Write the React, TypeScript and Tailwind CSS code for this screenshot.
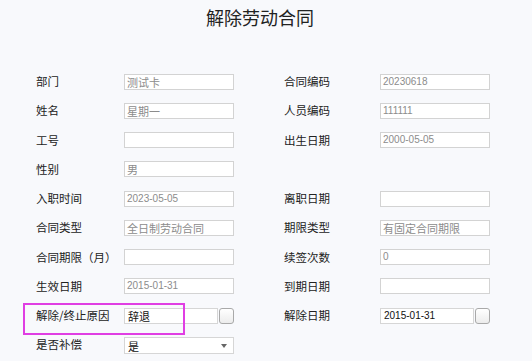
import React from 'react';

type Field = {
  label: string;
  value?: string;
  kind?: 'text' | 'date' | 'select';
  dark?: boolean;
  digits?: boolean;
};

// 左右两列，每行一对
const rows: [Field, Field | null][] = [
  [{ label: '部门', value: '测试卡' }, { label: '合同编码', value: '20230618', digits: true }],
  [{ label: '姓名', value: '星期一' }, { label: '人员编码', value: '111111', digits: true }],
  [{ label: '工号', value: '' }, { label: '出生日期', value: '2000-05-05', digits: true }],
  [{ label: '性别', value: '男' }, null],
  [{ label: '入职时间', value: '2023-05-05', digits: true }, { label: '离职日期', value: '' }],
  [{ label: '合同类型', value: '全日制劳动合同' }, { label: '期限类型', value: '有固定合同期限' }],
  [{ label: '合同期限（月）', value: '' }, { label: '续签次数', value: '0', digits: true }],
  [{ label: '生效日期', value: '2015-01-31', digits: true }, { label: '到期日期', value: '' }],
  [
    { label: '解除/终止原因', value: '辞退', kind: 'date', dark: true },
    { label: '解除日期', value: '2015-01-31', kind: 'date', dark: true, digits: true },
  ],
  [{ label: '是否补偿', value: '是', kind: 'select', dark: true }, null],
];

const PickButton = () => (
  <div className="w-[15px] h-[16px] rounded-[3px] border border-[#a9a9a9] bg-gradient-to-b from-white to-[#ececec] shrink-0" />
);

const Input = ({ f }: { f: Field }) => {
  const textCls = `${f.dark ? 'text-[#111]' : 'text-[#8c8c8c]'} ${f.digits ? "text-[10px] font-['Liberation_Sans',sans-serif]" : 'text-[11px]'}`;
  if (f.kind === 'date') {
    return (
      <div className="flex items-center w-[110px] gap-[1px]">
        <div className={`flex-1 h-[16px] bg-white border border-[#d6d6d6] pl-[3px] leading-[14px] ${textCls}`}>{f.value}</div>
        <PickButton />
      </div>
    );
  }
  if (f.kind === 'select') {
    return (
      <div className={`w-[110px] h-[17px] mt-[2px] bg-white border border-[#d6d6d6] pl-[3px] flex items-center justify-between pr-[6px] ${textCls}`}>
        <span>{f.value}</span>
        <span className="w-0 h-0 border-l-[3px] border-r-[3px] border-t-[4px] border-l-transparent border-r-transparent border-t-[#666]" />
      </div>
    );
  }
  return (
    <div className={`w-[110px] h-[16px] bg-white border border-[#d3d3d3] pl-[2px] leading-[14px] ${textCls}`}>
      {f.value}
    </div>
  );
};

export default function App() {
  return (
    <div className="relative w-[532px] h-[361px] overflow-hidden bg-[#f8f9fc] font-['Noto_Sans_CJK_SC','Liberation_Sans',sans-serif] text-[#222]">
      {/* 标题 */}
      <div className="h-[67px] pt-[5px] pl-[206px] text-[18px] leading-[24px] text-[#222]">解除劳动合同</div>

      {/* 表单 */}
      <div className="grid grid-cols-[248px_1fr] auto-rows-[29.25px] pl-[36px]">
        {rows.map(([l, r], i) => (
          <React.Fragment key={i}>
            <div className="flex items-center">
              <div className="w-[88px] text-[11.5px]">{l.label}</div>
              <Input f={l} />
            </div>
            <div className="flex items-center">
              {r && (
                <>
                  <div className="w-[96px] text-[11.5px]">{r.label}</div>
                  <Input f={r} />
                </>
              )}
            </div>
          </React.Fragment>
        ))}
      </div>

      {/* 标注框 */}
      <div className="absolute left-[23px] top-[303px] w-[162px] h-[32px] border-2 border-[#e03ee3]" />
    </div>
  );
}
